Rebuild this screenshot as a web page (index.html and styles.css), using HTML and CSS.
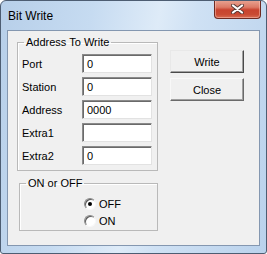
FILE: index.html
```html
<html>
<head>
<title>Bit Write</title>
<link rel="stylesheet" href="styles.css">
</head>
<body>
<div class="window">
  <div class="titlebar">
    <span class="title">Bit Write</span>
    <span class="close-btn">
      <svg width="13" height="10" viewBox="0 0 13 10">
        <path d="M2 1.5 L11 8.5 M11 1.5 L2 8.5" stroke="#5a3a36" stroke-width="4" stroke-linecap="round"/>
        <path d="M2 1.5 L11 8.5 M11 1.5 L2 8.5" stroke="#ffffff" stroke-width="2.2" stroke-linecap="round"/>
      </svg>
    </span>
  </div>

  <div class="client">
    <div class="left">
      <fieldset class="group address">
        <legend>Address To Write</legend>
        <div class="rows">
          <div class="row"><label>Port</label><span class="field">0</span></div>
          <div class="row"><label>Station</label><span class="field">0</span></div>
          <div class="row"><label>Address</label><span class="field">0000</span></div>
          <div class="row"><label>Extra1</label><span class="field"></span></div>
          <div class="row"><label>Extra2</label><span class="field">0</span></div>
        </div>
      </fieldset>

      <fieldset class="group onoff">
        <legend>ON or OFF</legend>
        <div class="radios">
          <div class="radio-row"><span class="radio checked"></span>OFF</div>
          <div class="radio-row"><span class="radio"></span>ON</div>
        </div>
      </fieldset>
    </div>

    <div class="buttons">
      <div class="btn default">Write</div>
      <div class="btn">Close</div>
    </div>
  </div>
</div>
</body>
</html>
```

FILE: styles.css
```css
body {
margin: 0;
background: white;
font-family: "Liberation Sans", Arial, sans-serif;
font-size: 11px;
color: black;
}

/* the window frame */
.window {
width: 267px; height: 254px;
box-sizing: border-box;
border: 1px solid #4d5d72;
border-radius: 6px 6px 3px 3px;
background: linear-gradient(100deg, #b7cfe9 0%, #c6dbf1 30%, #deebf8 52%, #cfe1f4 64%, #bad2ec 100%);
overflow: hidden;
}
.titlebar { height: 29px; display: flex; align-items: center; }
.title { padding-left: 7px; font-size: 12px; color: #000; }

.close-btn {
margin-left: auto; margin-right: 5px; margin-top: -1px;
align-self: flex-start;
width: 47px; height: 19px;
box-sizing: border-box;
border: 1px solid #6e2a22;
border-top: none;
border-radius: 0 0 4px 4px;
background: linear-gradient(180deg, #e9a695 0%, #dc7a66 40%, #c8432f 55%, #c94a33 80%, #d86c53 100%);
box-shadow: inset 0 0 0 1px rgba(255,210,200,0.45);
display: flex; align-items: center; justify-content: center;
}

.client {
margin: 0 6px;
height: 216px;
box-sizing: border-box;
border: 1px solid #8497b0;
background: #f0f0f0;
display: flex;
}

.left { display: flex; flex-direction: column; }

.group {
margin: 4px 0 0 9px;
padding: 0 5px 5px 4px;
border: 1px solid #b9b9b9;
box-shadow: inset 1px 1px 0 #fff;
min-width: 0;
}
.group legend { padding: 0 2px; margin-left: 2px; line-height: 14px; }
.address { width: 141px; box-sizing: border-box; }
.onoff { width: 139px; box-sizing: border-box; margin: 5px 0 0 11px; padding-bottom: 1px; }

.rows { display: flex; flex-direction: column; gap: 4px; margin-top: 5px; }
.row { display: flex; align-items: center; height: 19px; }
.row label { width: 60px; }
.field {
width: 70px; height: 19px;
box-sizing: border-box;
border: 1px solid;
border-color: #8a8a8a #e2e2e2 #e2e2e2 #8a8a8a;
box-shadow: inset 1px 1px 0 #6a6a6a;
background: white;
padding: 2px 0 0 4px;
line-height: 14px;
}

.radios { margin-top: 5px; padding-left: 60px; }
.radio-row { display: flex; align-items: center; height: 17px; }
.radio {
width: 12px; height: 12px;
box-sizing: border-box;
border-radius: 50%;
border: 1px solid;
border-color: #8a8a8a #f8f8f8 #f8f8f8 #8a8a8a;
box-shadow: inset 1px 1px 0 #5a5a5a;
background: white;
margin-right: 3px;
display: flex; align-items: center; justify-content: center;
}
.radio.checked::after { content: ""; width: 4px; height: 4px; border-radius: 50%; background: black; }

.buttons { display: flex; flex-direction: column; gap: 5px; margin: 19px 0 0 12px; }
.btn {
width: 74px; height: 23px;
box-sizing: border-box;
border: 1px solid;
border-color: #f8f8f8 #6a6a6a #6a6a6a #f8f8f8;
box-shadow: inset -1px -1px 0 #a0a0a0;
background: #f0f0f0;
display: flex; align-items: center; justify-content: center;
}
.btn.default { border-color: #e8e8e8 #4a4a4a #4a4a4a #e8e8e8; }
```
